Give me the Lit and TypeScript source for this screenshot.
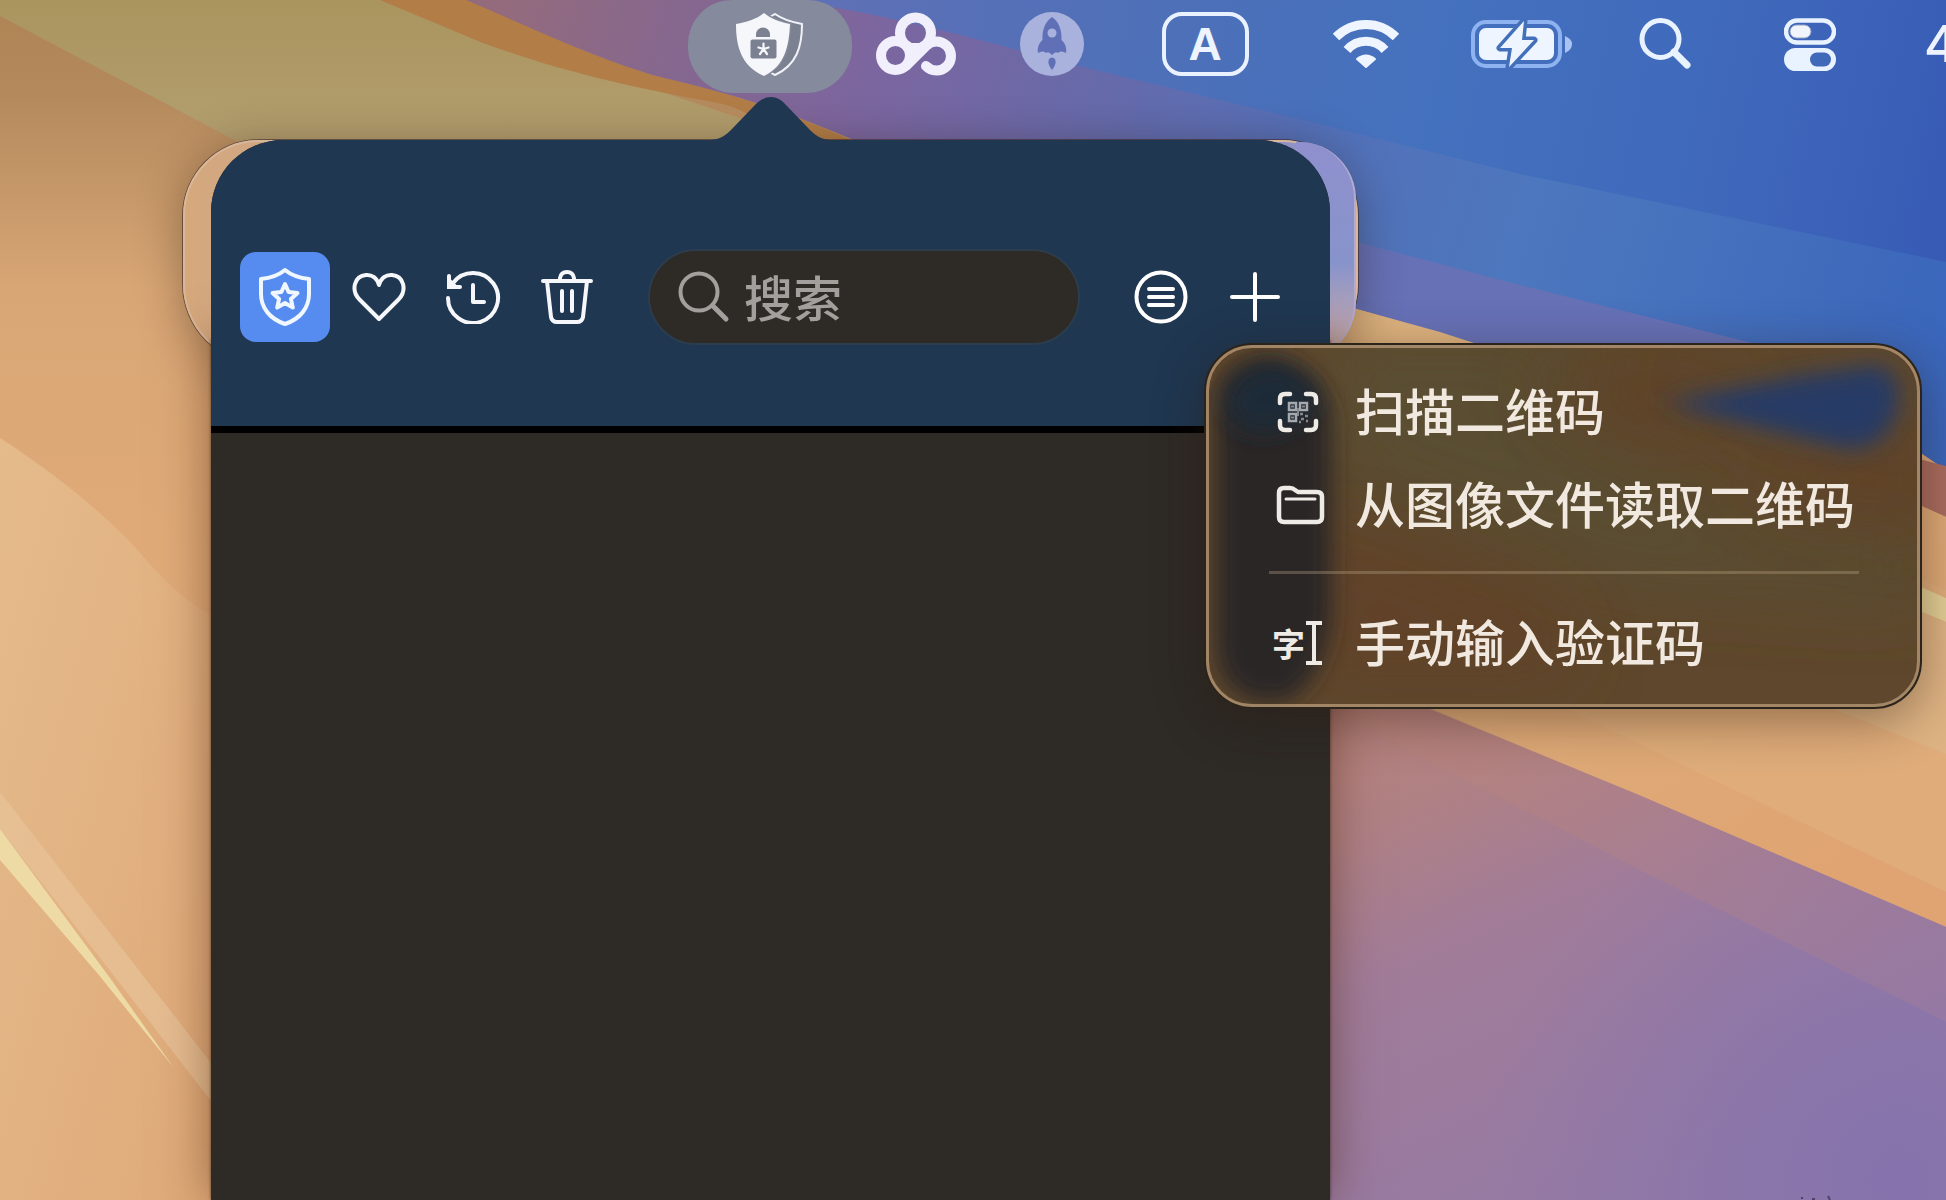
import { LitElement, html, css, svg } from "lit";
import { customElement } from "lit/decorators.js";

const shieldLock = html`<svg width="70" height="64" viewBox="0 0 70 64" aria-hidden="true">
  <path d="M40 1 C47 6 56 9 67 11 C67 33 62 52 40 62 C22 54 13 33 13 11 C24 9 33 6 40 1Z" fill="#7c8191" stroke="#f1f2f8" stroke-width="2"/>
  <path d="M29 0 C22 6 12 9 1 11 C1 33 6 53 29 63 C50 53 54 33 55 11 C45 9 36 6 29 0Z" fill="#f6f7fb" stroke="#858a9b" stroke-width="3" paint-order="stroke"/>
  <path d="M21 24 V21.500 A7 7 0 0 1 35 21.500 V24Z" fill="#7c8191"/>
  <rect x="15.500" y="26.500" width="26" height="19" rx="2" fill="#7c8191"/>
  <g stroke="#f6f7fb" stroke-width="2.200" stroke-linecap="round"><path d="M28.500 36 V30.500 M28.500 36 L23.500 34.500 M28.500 36 L33.500 34.500 M28.500 36 L25 41 M28.500 36 L32 41"/></g>
</svg>`;

const cloudRings = html`<svg width="80" height="64" viewBox="0 0 80 64" fill="none" stroke="#f1effb" stroke-width="10" stroke-linecap="round" aria-hidden="true">
  <path d="M27 31 L52 31 L40 45Z" fill="#f1effb" stroke="none"/>
  <circle cx="39.500" cy="21" r="15.500"/>
  <circle cx="19.500" cy="43.500" r="14.500"/>
  <path d="M30 54 L50 34 A14.500 14.500 0 1 1 50 54"/>
</svg>`;

const rocket = html`<svg width="64" height="64" viewBox="0 0 64 64" aria-hidden="true">
  <circle cx="32" cy="32" r="32" fill="#a9b2dc"/>
  <path d="M32 5 C25 10 22 18 22.500 28 C19 31 17 36 18 41 C21 39 24 39 26 41 C28 39 30 41 32 43 C34 41 36 39 38 41 C40 39 43 39 46 41 C47 36 45 31 41.500 28 C42 18 39 10 32 5Z" fill="#6070b6"/>
  <circle cx="32" cy="21" r="4.500" fill="#a9b2dc"/>
  <path d="M29 47 Q32 44 35 47 Q37 52 32 58 Q27 52 29 47Z" fill="#6070b6"/>
</svg>`;

const wifi = html`<svg width="68" height="50" viewBox="0 0 68 50" fill="none" stroke="#eef5ff" stroke-width="9" aria-hidden="true">
  <path d="M4 18 A42 42 0 0 1 64 18"/>
  <path d="M15 31 A25 25 0 0 1 53 31"/>
  <path d="M25 40 Q34 33 43 40 L34 48Z" fill="#eef5ff" stroke-width="2" stroke-linejoin="round"/>
</svg>`;

const battery = html`<svg width="102" height="48" viewBox="0 0 102 48" aria-hidden="true">
  <rect x="2" y="2" width="87" height="44" rx="13" fill="none" stroke="#8fb3f0" stroke-width="4"/>
  <rect x="8" y="8" width="75" height="32" rx="7" fill="#eef5ff"/>
  <path d="M94 16 Q101 19 101 24 Q101 30 94 33Z" fill="#a9c4f3"/>
  <path d="M53 1 L29 28 H41 L38 47 L63 20 H51Z" fill="#eef5ff" stroke="#4470bb" stroke-width="7" paint-order="stroke" stroke-linejoin="round"/>
</svg>`;

const spotlight = html`<svg width="52" height="52" viewBox="0 0 52 52" fill="none" stroke="#e9f2ff" aria-hidden="true">
  <circle cx="21.500" cy="21" r="18.500" stroke-width="5"/>
  <path d="M35 34 L48 47" stroke-width="7" stroke-linecap="round"/>
</svg>`;

const controlCentre = html`<svg width="52" height="53" viewBox="0 0 52 53" aria-hidden="true">
  <rect x="2" y="2.500" width="48" height="22" rx="11" fill="none" stroke="#e9f2ff" stroke-width="4.500"/>
  <rect x="6" y="7" width="21" height="13" rx="6.500" fill="#f1f4fa" stroke="#8fa2c4" stroke-width="1"/>
  <rect x="0" y="30" width="52" height="23" rx="11.500" fill="#e9f2ff"/>
  <rect x="26" y="34.500" width="21" height="14" rx="7" fill="#4169b9"/>
</svg>`;

const shieldStar = html`<svg width="54" height="60" viewBox="0 0 54 60" fill="none" stroke="#f1f7ff" stroke-width="4" stroke-linejoin="round" aria-hidden="true">
  <path d="M27 3 C21 8 12 11 3 12 V27 C3 41 12 52 27 57 C42 52 51 41 51 27 V12 C42 11 33 8 27 3Z"/>
  <path d="M27 17 L30.600 25 L39.500 26 L32.900 31.900 L34.800 40.600 L27 36 L19.200 40.600 L21.100 31.900 L14.500 26 L23.400 25Z" stroke-width="4"/>
</svg>`;

const heart = html`<svg width="54" height="50" viewBox="0 0 54 50" fill="none" stroke="#f6f7fb" stroke-width="4" stroke-linejoin="round" aria-hidden="true">
  <path d="M27 47 L7 27 C-1 18 2 4 14 3 C20 2.500 25 6 27 13 C29 6 34 2.500 40 3 C52 4 55 18 47 27Z"/>
</svg>`;

const history = html`<svg width="56" height="54" viewBox="0 0 56 54" fill="none" stroke="#f6f7fb" stroke-width="4" stroke-linecap="round" aria-hidden="true">
  <path d="M3 28 A25 25 0 1 0 8 13"/>
  <path d="M4 6 V17 H15" stroke-linejoin="miter"/>
  <path d="M4 17 V9 L12 17Z" fill="#f6f7fb" stroke-width="2"/>
  <path d="M28 15 V32 H39" stroke-linejoin="round"/>
</svg>`;

const trash = html`<svg width="52" height="56" viewBox="0 0 52 56" fill="none" stroke="#f6f7fb" stroke-width="4" stroke-linecap="round" stroke-linejoin="round" aria-hidden="true">
  <path d="M2 12 H50"/>
  <path d="M19 11 V9 Q20 3 26 3 Q32 3 33 9 V11"/>
  <path d="M6 12 L10 48 Q11 53 16 53 H36 Q41 53 42 48 L46 12"/>
  <path d="M21 22 V42 M31 22 V42"/>
</svg>`;

const lens = html`<svg width="52" height="52" viewBox="0 0 52 52" fill="none" stroke="#a39f9c" stroke-width="4" stroke-linecap="round" aria-hidden="true">
  <circle cx="21" cy="21" r="18.500"/><path d="M34.500 34.500 L48 48" stroke-width="5"/>
</svg>`;

const listCircle = html`<svg width="54" height="54" viewBox="0 0 54 54" fill="none" stroke="#ffffff" aria-hidden="true">
  <circle cx="27" cy="27" r="24.500" stroke-width="4"/>
  <path d="M15 19 H39 M15 27 H39 M15 35 H39" stroke-width="4" stroke-linecap="round"/>
</svg>`;

const plus = html`<svg width="50" height="50" viewBox="0 0 50 50" stroke="#ffffff" stroke-width="4" stroke-linecap="round" aria-hidden="true">
  <path d="M25 2 V48 M2 25 H48"/>
</svg>`;

const qrScan = html`<svg width="58" height="44" viewBox="0 0 58 44" fill="none" stroke="#eeeae6" stroke-width="4.500" stroke-linecap="round" aria-hidden="true">
  <path d="M11 13 V9 Q11 4 16 4 H21 M37 4 H42 Q47 4 47 9 V13 M47 31 V35 Q47 40 42 40 H37 M21 40 H16 Q11 40 11 35 V31"/>
  <g stroke="#a5a8ad" stroke-width="2.500" stroke-linecap="butt">
    <rect x="20" y="13" width="7" height="7"/><rect x="31" y="13" width="7" height="7"/><rect x="20" y="24" width="7" height="7"/>
  </g>
  <path d="M31 24 h3 M36 26 h3 M32 29 h3 M37 31 h2 M30 32 h2" stroke="#85898f" stroke-width="2.500" stroke-linecap="butt"/>
  <path d="M22 16.500 h3 M33 16.500 h3 M22 27.500 h3 M29 18 v8" stroke="#85898f" stroke-width="2" stroke-linecap="butt"/>
</svg>`;

const folder = html`<svg width="58" height="44" viewBox="0 0 58 44" fill="none" stroke="#eeeae6" stroke-width="4.500" stroke-linejoin="round" aria-hidden="true">
  <path d="M10 34 V10 Q10 5 15 5 H21 Q24 5 26 7 L29 9 H48 Q53 9 53 14 V34 Q53 39 48 39 H15 Q10 39 10 34Z"/>
  <path d="M17 16 H46" stroke-width="3" stroke-linecap="round"/>
</svg>`;

const beam = html`<svg width="16" height="46" viewBox="0 0 16 46" fill="none" stroke="#eeeae6" stroke-width="4" aria-hidden="true">
  <path d="M0 3 H16 M8 3 V43 M0 43 H16"/>
</svg>`;

const wallpaper = svg`
  <defs>
    <linearGradient id="sand" x1="0" y1="0" x2="0" y2="1">
      <stop offset="0" stop-color="#ae8455"/><stop offset=".08" stop-color="#b48a5d"/>
      <stop offset=".24" stop-color="#d8a675"/><stop offset=".45" stop-color="#e0aa78"/><stop offset="1" stop-color="#e1b080"/>
    </linearGradient>
    <linearGradient id="dune" x1="0" y1="0" x2="1" y2="1">
      <stop offset="0" stop-color="#e5bb8c"/><stop offset="1" stop-color="#dfa978"/>
    </linearGradient>
    <linearGradient id="khaki" x1="0" y1="0" x2="0" y2="1">
      <stop offset="0" stop-color="#aa955f"/><stop offset="1" stop-color="#b39e6f"/>
    </linearGradient>
    <linearGradient id="dusk" gradientUnits="userSpaceOnUse" x1="500" y1="0" x2="1400" y2="250">
      <stop offset="0" stop-color="#946b7c"/><stop offset=".2" stop-color="#85678f"/><stop offset=".4" stop-color="#7c669f"/>
      <stop offset=".7" stop-color="#626bad"/><stop offset="1" stop-color="#6671b6"/>
    </linearGradient>
    <linearGradient id="sky" gradientUnits="userSpaceOnUse" x1="800" y1="0" x2="1946" y2="240">
      <stop offset="0" stop-color="#6070b6"/><stop offset=".3" stop-color="#4e70b8"/><stop offset=".55" stop-color="#4471be"/>
      <stop offset=".8" stop-color="#3f68bb"/><stop offset="1" stop-color="#375bb5"/>
    </linearGradient>
    <linearGradient id="band" gradientUnits="userSpaceOnUse" x1="1130" y1="100" x2="1946" y2="360">
      <stop offset="0" stop-color="#5a6eb4" stop-opacity="0"/><stop offset=".2" stop-color="#5470b8"/><stop offset=".5" stop-color="#4c77be"/><stop offset="1" stop-color="#3a66bb"/>
    </linearGradient>
    <linearGradient id="amber" gradientUnits="userSpaceOnUse" x1="1400" y1="330" x2="1800" y2="900">
      <stop offset="0" stop-color="#deb37f"/><stop offset="1" stop-color="#dfa472"/>
    </linearGradient>
    <linearGradient id="mauve" gradientUnits="userSpaceOnUse" x1="1420" y1="690" x2="1640" y2="1200">
      <stop offset="0" stop-color="#b6827c"/><stop offset=".18" stop-color="#b08184"/><stop offset=".45" stop-color="#a17c99"/><stop offset="1" stop-color="#957aa4"/>
    </linearGradient>
    <linearGradient id="mauve2" gradientUnits="userSpaceOnUse" x1="1400" y1="720" x2="1946" y2="1040">
      <stop offset="0" stop-color="#b98378"/><stop offset=".5" stop-color="#b08188"/><stop offset="1" stop-color="#a07b9c"/>
    </linearGradient>
    <radialGradient id="violet" gradientUnits="userSpaceOnUse" cx="1900" cy="1180" r="420">
      <stop offset="0" stop-color="#8573ad"/><stop offset=".4" stop-color="#8975ab" stop-opacity=".8"/><stop offset="1" stop-color="#8b76ab" stop-opacity="0"/>
    </radialGradient>
  </defs>
  <rect width="1946" height="1200" fill="url(#sand)"/>
  <path d="M0 438 C50 470 100 510 133 545 C155 570 180 600 215 617 V1200 H0Z" fill="url(#dune)"/>
  <path d="M0 792 L215 1068 V1106 L0 829Z" fill="#e7c197" opacity=".75"/>
  <path d="M0 829 L110 978 L174 1068 L98 974 L0 860Z" fill="#eedaa5"/>
  <path d="M0 0 H390 L760 125 L800 145 H244 L0 16Z" fill="url(#khaki)"/>
  <path d="M380 0 H470 C550 36 600 60 660 77 C740 96 790 112 862 145 H790 C770 130 750 108 713 102 C610 84 540 64 483 43Z" fill="#b27d47"/>
  <path d="M466 0 H1946 V345 H1480 L1353 308 L1200 200 L858 142 C790 112 740 96 660 77 C600 60 550 36 466 0Z" fill="url(#dusk)"/>
  <path d="M1120 70 L1946 220 V470 L1760 345 L1520 285 L1353 241 L1120 150Z" fill="url(#band)"/>
  <path d="M780 0 H1946 V262 L1520 174 L1307 121 L1120 76 C990 44 880 10 780 0Z" fill="url(#sky)"/>
  <path d="M1900 454 L1946 466 V517 L1900 496Z" fill="#aa6c60"/>
  <path d="M1320 300 L1353 308 L1440 332 L1480 345 H1560 L1900 497 L1946 517 V930 L1639 795 L1430 708 L1320 660Z" fill="url(#amber)"/>
  <path d="M1560 706 L1900 570 L1946 590 V892Z" fill="#dfae7c" opacity=".8"/>
  <path d="M1900 578 L1946 598 V622 L1900 603Z" fill="#e3cf95"/>
  <path d="M1831 708 L1900 603 L1946 622 V754Z" fill="#deb383"/>
  <path d="M1325 665 L1432 710 L1639 795 L1946 927 V1200 H1325Z" fill="url(#mauve)"/>
  <path d="M1325 665 L1432 710 L1639 795 L1946 927 V1200 H1325Z" fill="url(#violet)"/>
  <path d="M1325 706 L1432 709 L1639 795 L1946 927 V1022 L1640 870Z" fill="url(#mauve2)" opacity=".45"/>
  <path d="M1828 1196 l2 4 M1801 1198 h2 M1812 1199 h3" stroke="#4f4468" stroke-width="2"/>
`;

@customElement("status-bar")
export class StatusBar extends LitElement {
  static styles = css`
    :host { display: block; overflow: hidden; }
    .bar { display: flex; justify-content: flex-end; height: 93px; }
    button {
      display: flex; align-items: center; justify-content: center; flex: none;
      height: 88px; border: 0; padding: 0; background: none;
    }
    .active { width: 164px; height: 93px; padding-bottom: 4px; box-sizing: border-box; border-radius: 44px 44px 46px 46px; background: #858a9d; }
    .w127 { width: 127px; } .w146 { width: 146px; } .w160 { width: 160px; }
    .w162 { width: 162px; } .w150 { width: 150px; } .w136 { width: 136px; } .w154 { width: 154px; }
    .source {
      display: flex; align-items: center; justify-content: center; box-sizing: border-box;
      width: 87px; height: 64px; border: 4px solid #eaf2ff; border-radius: 20px;
      font: 700 46px/56px "Liberation Sans", Arial, sans-serif; color: #eef4ff;
    }
    .clock {
      width: 59px; padding-left: 37px; box-sizing: border-box; overflow: hidden; justify-content: flex-start;
      font: 500 51px/84px Inter, "Liberation Sans", sans-serif; color: #eef4ff;
    }
  `;
  render() {
    return html`<nav class="bar">
      <button class="active" aria-label="验证码">${shieldLock}</button>
      <button class="w127" aria-label="网盘">${cloudRings}</button>
      <button class="w146" aria-label="启动">${rocket}</button>
      <button class="w160" aria-label="输入法 A"><span class="source">A</span></button>
      <button class="w162" aria-label="Wi-Fi">${wifi}</button>
      <button class="w150" aria-label="电池">${battery}</button>
      <button class="w136" aria-label="聚焦搜索">${spotlight}</button>
      <button class="w154" aria-label="控制中心">${controlCentre}</button>
      <button class="clock">4</button>
    </nav>`;
  }
}

@customElement("code-popover")
export class CodePopover extends LitElement {
  static styles = css`
    :host { display: flex; flex-direction: column; }
    .glass {
      position: absolute; inset: 0 -28px auto -28px; height: 224px; box-sizing: border-box;
      border-radius: 76px 76px 80px 80px; border: 2px solid #d9b79a;
      background: linear-gradient(90deg, #d6a87c 0, #d3a880 28px, #8e90c6 calc(100% - 40px), #9195c8);
      box-shadow: 0 0 0 1px rgba(60, 40, 40, .6), 0 6px 46px rgba(40, 20, 10, .38);
    }
    .tint {
      position: absolute; top: 2px; right: -26px; width: 60px; height: 220px; border-radius: 0 74px 78px 0;
      background: linear-gradient(#8f90cd, #8793cb 55%, #b6a4b8 80%, #cfaf9e);
      border-right: 2px solid #b3acd0; box-sizing: border-box;
    }
    .arrow { position: absolute; left: 50%; margin-left: -60px; top: -44px; }
    .panel {
      position: relative; display: flex; flex-direction: column; flex: 1; overflow: hidden;
      border-radius: 72px 72px 0 0; background: #2e2a26;
    }
    .shade { position: absolute; inset: 200px 0 0; box-shadow: 0 0 46px rgba(70, 30, 10, .5), 0 0 3px rgba(40, 30, 20, .7); }
    header {
      display: flex; align-items: center; gap: 36px; box-sizing: border-box; height: 286px;
      padding: 27px 30px 0 29px; background: #1f3751;
    }
    .group { display: flex; gap: 4px; }
    button {
      display: flex; align-items: center; justify-content: center;
      width: 90px; height: 90px; padding: 0; border: 0; border-radius: 16px; background: none;
    }
    .selected { background: #568cf0; }
    .search {
      display: flex; align-items: center; gap: 14px; flex: 1; min-width: 0; box-sizing: border-box;
      height: 96px; padding: 0 28px; border: 2px solid #2c3d4d; border-radius: 48px; background: #2e2a26;
    }
    .search svg { flex: none; }
    input {
      flex: 1; min-width: 0; height: 72px; padding: 0 0 2px; border: 0; outline: 0; background: none; color: #e9e6e3;
      font: 500 49px/70px "Noto Sans CJK SC", sans-serif;
    }
    input::placeholder { color: #a39f9c; opacity: 1; }
    main { flex: 1; border-top: 7px solid #000; background: #2e2a26; }
  `;
  render() {
    return html`
      <div class="glass"></div>
      <div class="tint"></div>
      <div class="shade"></div>
      <svg class="arrow" width="120" height="46" viewBox="0 0 120 46" aria-hidden="true">
        <path d="M0 46 V44 C10 43 15 39 20 34 L43 10 C54 -2 66 -2 76 10 L99 34 C104 39 109 43 119 44 V46Z" fill="#1f3751"/>
      </svg>
      <section class="panel">
        <header>
          <div class="group">
            <button class="selected" aria-label="验证码">${shieldStar}</button>
            <button aria-label="收藏">${heart}</button>
            <button aria-label="历史">${history}</button>
            <button aria-label="删除">${trash}</button>
          </div>
          <label class="search">${lens}<input type="text" placeholder="搜索" aria-label="搜索"></label>
          <div class="group">
            <button aria-label="列表">${listCircle}</button>
            <button aria-label="添加">${plus}</button>
          </div>
        </header>
        <main></main>
      </section>`;
  }
}

@customElement("add-menu")
export class AddMenu extends LitElement {
  static styles = css`
    :host {
      display: block; box-sizing: border-box; border-radius: 48px;
      box-shadow: 0 12px 50px rgba(40, 25, 15, .42);
    }
    .surface {
      position: relative; overflow: hidden; border-radius: 48px; border: 2px solid #2b241d;
      background: #5e472c;
    }
    .tones { position: absolute; inset: 0; width: 100%; height: 100%; }
    .rim { position: absolute; inset: 0; border: 3px solid rgba(190, 160, 125, .72); border-radius: 46px; pointer-events: none; }
    .items { position: relative; display: flex; flex-direction: column; padding: 20px 61px 18px 63px; }
    button {
      display: flex; align-items: center; gap: 28px; height: 93px; padding: 0 4px 0 0; border: 0; background: none;
      color: #f1e9df; font: 500 50px/88px "Noto Sans CJK SC", sans-serif; white-space: nowrap; text-align: left;
    }
    button svg { flex: none; }
    .label { align-self: flex-start; }
    .glyph { display: flex; align-items: center; gap: 1px; width: 58px; padding-left: 3px; box-sizing: border-box; flex: none; }
    .glyph span { font: 700 33px/40px "Noto Sans CJK SC", sans-serif; color: #eeeae6; }
    hr { width: 100%; height: 3px; margin: 20px 0 22px; border: 0; background: rgba(190, 170, 140, .33); }
  `;
  render() {
    return html`<div class="surface">
      <svg class="tones" viewBox="0 0 713 362" preserveAspectRatio="none" aria-hidden="true">
        <defs>
          <filter id="soft" x="-30%" y="-30%" width="160%" height="160%"><feGaussianBlur stdDeviation="11"/></filter>
          <filter id="wide" x="-40%" y="-40%" width="180%" height="180%"><feGaussianBlur stdDeviation="34"/></filter>
        </defs>
        <rect width="713" height="362" fill="#5e472c"/>
        <path d="M120 -20 H420 L330 60 L560 190 L713 190 L713 260 L420 240 L130 130Z" fill="#5a4d30" filter="url(#wide)"/>
        <path d="M300 30 L560 30 L460 90Z M100 180 L330 250 L380 330 L100 330Z M520 130 L713 90 V190Z" fill="#633f28" opacity=".6" filter="url(#wide)"/>
        <path d="M10 60 Q16 14 60 12 C92 12 124 40 125 80 V270 Q120 330 82 356 H50 Q10 344 10 300Z" fill="#2b2827" filter="url(#soft)"/>
        <path d="M20 50 Q40 18 70 20 Q108 32 112 60 Q60 110 22 70Z" fill="#1c2b39" filter="url(#soft)"/>
        <path d="M455 58 L600 30 L670 20 Q692 26 692 56 Q684 104 640 104 L560 84Z" fill="#283b65" filter="url(#soft)"/>
      </svg>
      <div class="rim"></div>
      <div class="items" role="menu">
        <button role="menuitem">${qrScan}<span class="label">扫描二维码</span></button>
        <button role="menuitem">${folder}<span class="label">从图像文件读取二维码</span></button>
        <hr>
        <button role="menuitem"><span class="glyph" aria-hidden="true"><span>字</span>${beam}</span><span class="label">手动输入验证码</span></button>
      </div>
    </div>`;
  }
}

@customElement("app-root")
export class AppRoot extends LitElement {
  static styles = css`
    :host { display: block; }
    .desktop { position: relative; min-height: 100vh; overflow: hidden; background: #dca977; }
    .wallpaper { position: absolute; inset: 0; width: 100%; height: 100%; }
    status-bar { position: relative; }
    code-popover { position: absolute; top: 140px; right: 616px; bottom: 0; left: 211px; }
    add-menu { position: absolute; top: 343px; right: 24px; }
  `;
  render() {
    return html`<div class="desktop">
      <svg class="wallpaper" viewBox="0 0 1946 1200" preserveAspectRatio="xMaxYMin slice" aria-hidden="true">${wallpaper}</svg>
      <status-bar></status-bar>
      <code-popover></code-popover>
      <add-menu></add-menu>
    </div>`;
  }
}
